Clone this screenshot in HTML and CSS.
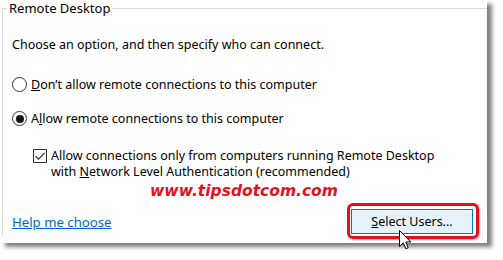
FILE: index.html
```html
<!DOCTYPE html>
<html>
<head>
<meta charset="utf-8">
<link rel="stylesheet" href="styles.css">
</head>
<body>
<div class="paper">
  <fieldset class="group">
    <legend class="legend">Remote Desktop</legend>
    <div class="intro">Choose an option, and then specify who can connect.</div>
    <div class="row radio-row first">
      <span class="radio"></span>
      <span class="label"><u>D</u>on’t allow remote connections to this computer</span>
    </div>
    <div class="row radio-row second">
      <span class="radio checked"><span class="dot"></span></span>
      <span class="label">A<u>l</u>low remote connections to this computer</span>
    </div>
    <div class="row check-row">
      <span class="check">
        <svg width="12" height="12" viewBox="0 0 12 12"><path d="M1.5 6.2 L4.6 9.2 L10.6 2.8" fill="none" stroke="#333" stroke-width="1.2"/></svg>
      </span>
      <span class="label">Allow connections only from computers running Remote Desktop<br>with <u>N</u>etwork Level Authentication (recommended)</span>
    </div>
    <div class="watermark">www.tipsdotcom.com</div>
    <div class="bottom">
      <a class="help">Help me choose</a>
      <div class="highlight">
        <div class="button"><u>S</u>elect Users...</div>
      </div>
    </div>
  </fieldset>
  <svg class="cursor" width="13" height="20" viewBox="0 0 13 20"><path d="M0.5 0.5 L0.5 16.5 L4.3 12.8 L6.8 18.7 L9.2 17.7 L6.8 12 L11.8 12 Z" fill="#fff" stroke="#000" stroke-width="1" stroke-linejoin="miter"/></svg>
</div>
</body>
</html>
```
FILE: styles.css
```css
html, body {
  margin: 0;
  padding: 0;
  background: #ffffff;
}
body {
  width: 503px;
  height: 260px;
  overflow: hidden;
  font-family: "Noto Sans", "Liberation Sans", sans-serif;
  font-size: 12.5px;
  color: #000;
}
.paper {
  position: relative;
  width: 487px;
  height: 243px;
  background: #fff;
  box-shadow: 5px 4px 4px rgba(0, 0, 0, 0.5);
}
.group {
  margin: 0 0 0 2px;
  padding: 0 0 0 9px;
  height: 235px;
  border: none;
  border-top: 1px solid #dcdcdc;
  border-left: 1px solid #dcdcdc;
  min-width: 0;
}
.legend {
  padding: 0 2px;
  margin-left: -5px;
  line-height: 16px;
  font-size: 13px;
  color: #000;
}
.intro {
  margin-top: 21px;
  line-height: 16px;
}
.row {
  display: flex;
  align-items: center;
  line-height: 17px;
}
.radio-row.first {
  margin-top: 23px;
}
.radio-row.second {
  margin-top: 17px;
}
.radio {
  box-sizing: border-box;
  width: 15px;
  height: 15px;
  border: 1px solid #333;
  border-radius: 50%;
  margin-right: 4px;
  display: flex;
  align-items: center;
  justify-content: center;
  flex: none;
}
.dot {
  width: 8px;
  height: 8px;
  border-radius: 50%;
  background: #111;
}
.check-row {
  align-items: flex-start;
  margin-top: 21px;
  margin-left: 21px;
  line-height: 16px;
}
.check {
  box-sizing: border-box;
  width: 14px;
  height: 14px;
  border: 1px solid #333;
  margin-top: 1px;
  margin-right: 4px;
  display: flex;
  align-items: center;
  justify-content: center;
  flex: none;
}
.check svg {
  display: block;
}
.watermark {
  margin-left: 138px;
  margin-top: 1px;
  font-family: "DejaVu Sans", Verdana, sans-serif;
  font-weight: bold;
  font-style: italic;
  font-size: 15.5px;
  line-height: 20px;
  color: #e8101c;
}
.bottom {
  display: flex;
  justify-content: space-between;
  align-items: center;
  margin-top: 2px;
  margin-right: 8px;
}
.help {
  color: #0066cc;
  text-decoration: underline;
  line-height: 16px;
  font-size: 13.2px;
  margin-top: 2px;
}
.highlight {
  border: 3px solid #e3101c;
  border-radius: 6px;
  padding: 3px 3px 2px 1px;
  box-shadow: 1px 1px 2px rgba(0, 0, 0, 0.35);
}
.button {
  box-sizing: border-box;
  width: 122px;
  height: 25px;
  border: 1px solid #0078d7;
  background: #e5f1fb;
  display: flex;
  align-items: center;
  justify-content: center;
}
.cursor {
  position: absolute;
  left: 399px;
  top: 230px;
}
```
